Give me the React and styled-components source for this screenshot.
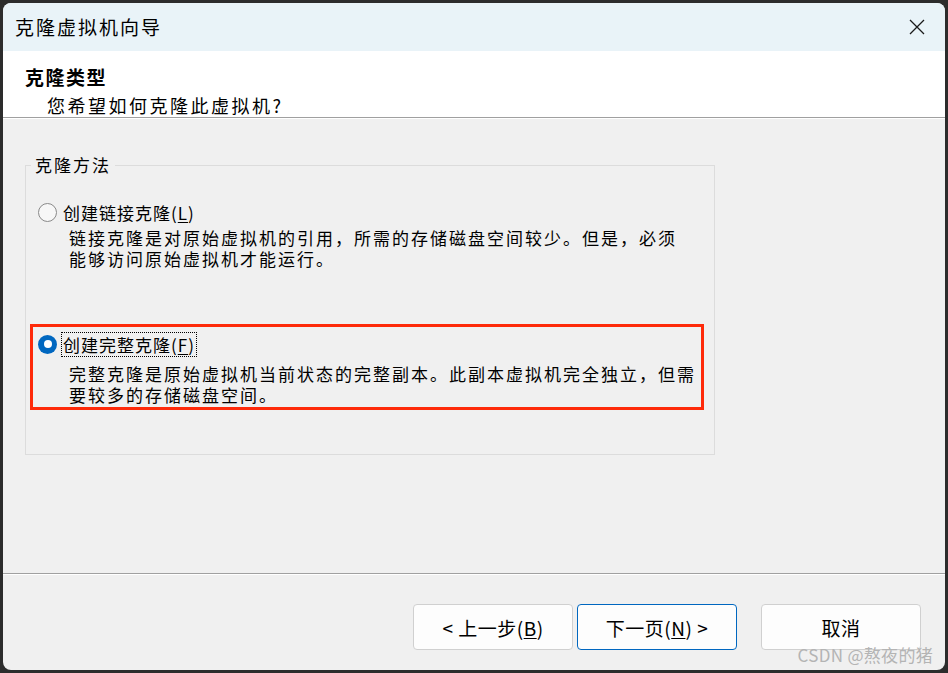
import React from "react";
import styled, { createGlobalStyle } from "styled-components";

const GlobalStyle = createGlobalStyle`
  html, body {
    margin: 0;
    padding: 0;
    background: #2c2c2c;
  }
  body {
    font-family: "Noto Sans CJK SC", "Noto Sans", sans-serif;
    color: #000;
  }
`;

const Screen = styled.div`
  width: 948px;
  height: 673px;
  padding: 3px;
  box-sizing: border-box;
`;

const Window = styled.div`
  position: relative;
  height: 667px;
  width: 942px;
  background: #f0f0f0;
  border-radius: 8px;
  overflow: hidden;
  display: flex;
  flex-direction: column;
`;

const TitleBar = styled.div`
  height: 48px;
  flex: none;
  background: #e9f3f8;
  display: flex;
  align-items: center;
  justify-content: space-between;
  padding: 0 20px 0 12px;
`;

const TitleText = styled.div`
  font-size: 19px;
  letter-spacing: 2px;
  line-height: 24px;
`;

const CloseButton = styled.div`
  width: 16px;
  height: 16px;
  display: flex;
`;

const Header = styled.div`
  height: 66px;
  flex: none;
  background: #fff;
  padding: 14px 0 0 22px;
  box-sizing: border-box;
`;

const HeaderTitle = styled.div`
  font-size: 19px;
  font-weight: 700;
  letter-spacing: 1.5px;
  line-height: 24px;
`;

const HeaderSub = styled.div`
  font-size: 18px;
  letter-spacing: 2.5px;
  line-height: 24px;
  margin-top: 4px;
  padding-left: 22px;
`;

const Rule = styled.div`
  flex: none;
  height: 1px;
  background: #a0a0a0;
  border-bottom: 1px solid #fff;
`;

const Body = styled.div`
  flex: 1;
  padding: 36px 0 0 22px;
`;

const Group = styled.fieldset`
  margin: 0;
  width: 688px;
  box-sizing: border-box;
  border: 1px solid #dcdcdc;
  padding: 25px 0 44px 0;
  font-size: 17px;
`;

const Legend = styled.legend`
  margin-left: 5px;
  padding: 0 4px;
  line-height: 20px;
  letter-spacing: 2px;
`;

const Option = styled.div`
  padding-left: ${(p) => (p.$inset ? 0 : 12)}px;
`;

const Highlight = styled.div`
  margin: 55px 10px 0 4px;
  border: 3px solid #fe2a0a;
  padding: 5px 5px 2px 5px;
`;

const OptionHead = styled.div`
  display: flex;
  align-items: center;
  height: 24px;
`;

const Radio = styled.span`
  width: 19px;
  height: 19px;
  box-sizing: border-box;
  border-radius: 50%;
  flex: none;
  border: ${(p) => (p.$checked ? "none" : "1px solid #8a8a8a")};
  background: ${(p) => (p.$checked ? "#0067c0" : "#f7f7f7")};
  display: flex;
  align-items: center;
  justify-content: center;
  &::after {
    content: "";
    display: ${(p) => (p.$checked ? "block" : "none")};
    width: 8px;
    height: 8px;
    border-radius: 50%;
    background: #fff;
  }
`;

const Label = styled.span`
  margin-left: 5px;
  padding: 0 1px;
  line-height: 23px;
  letter-spacing: 1px;
  outline: ${(p) => (p.$focused ? "1px dotted #000" : "none")};
`;

const Key = styled.span`
  text-decoration: underline;
  text-underline-offset: 2px;
`;

const Desc = styled.div`
  margin-top: ${(p) => p.$gap}px;
  padding-left: 31px;
  line-height: 21px;
  letter-spacing: 2px;
  white-space: nowrap;
`;

const Footer = styled.div`
  flex: none;
  height: 95px;
  display: flex;
  justify-content: flex-end;
  padding: 29px 24px 0 0;
  box-sizing: border-box;
`;

const Button = styled.div`
  width: 160px;
  height: 46px;
  box-sizing: border-box;
  margin-left: ${(p) => p.$gap || 0}px;
  border: 1px solid ${(p) => (p.$primary ? "#0067c0" : "#d0d0d0")};
  border-radius: 4px;
  background: #fdfdfd;
  display: flex;
  align-items: center;
  justify-content: center;
  font-size: 19px;
  letter-spacing: 0.5px;
`;

const Watermark = styled.div`
  position: absolute;
  right: 12px;
  bottom: 4px;
  font-size: 17px;
  line-height: 22px;
  color: #b4b4b4;
  letter-spacing: 0.3px;
`;

export default function App() {
  return (
    <Screen>
      <GlobalStyle />
      <Window>
        <TitleBar>
          <TitleText>克隆虚拟机向导</TitleText>
          <CloseButton>
            <svg width="16" height="16" viewBox="0 0 16 16">
              <path d="M1 1 L15 15 M15 1 L1 15" stroke="#1a1a1a" strokeWidth="1.3" />
            </svg>
          </CloseButton>
        </TitleBar>
        <Header>
          <HeaderTitle>克隆类型</HeaderTitle>
          <HeaderSub>您希望如何克隆此虚拟机?</HeaderSub>
        </Header>
        <Rule />
        <Body>
          <Group>
            <Legend>克隆方法</Legend>
            <Option>
              <OptionHead>
                <Radio />
                <Label>
                  创建链接克隆(<Key>L</Key>)
                </Label>
              </OptionHead>
              <Desc $gap={3}>
                链接克隆是对原始虚拟机的引用，所需的存储磁盘空间较少。但是，必须
                <br />
                能够访问原始虚拟机才能运行。
              </Desc>
            </Option>
            <Highlight>
              <Option $inset>
                <OptionHead>
                  <Radio $checked />
                  <Label $focused>
                    创建完整克隆(<Key>F</Key>)
                  </Label>
                </OptionHead>
                <Desc $gap={7}>
                  完整克隆是原始虚拟机当前状态的完整副本。此副本虚拟机完全独立，但需
                  <br />
                  要较多的存储磁盘空间。
                </Desc>
              </Option>
            </Highlight>
          </Group>
        </Body>
        <Rule />
        <Footer>
          <Button>
            &lt; 上一步(<Key>B</Key>)
          </Button>
          <Button $primary $gap={4}>
            下一页(<Key>N</Key>) &gt;
          </Button>
          <Button $gap={24}>取消</Button>
        </Footer>
        <Watermark>CSDN @熬夜的猪</Watermark>
      </Window>
    </Screen>
  );
}
